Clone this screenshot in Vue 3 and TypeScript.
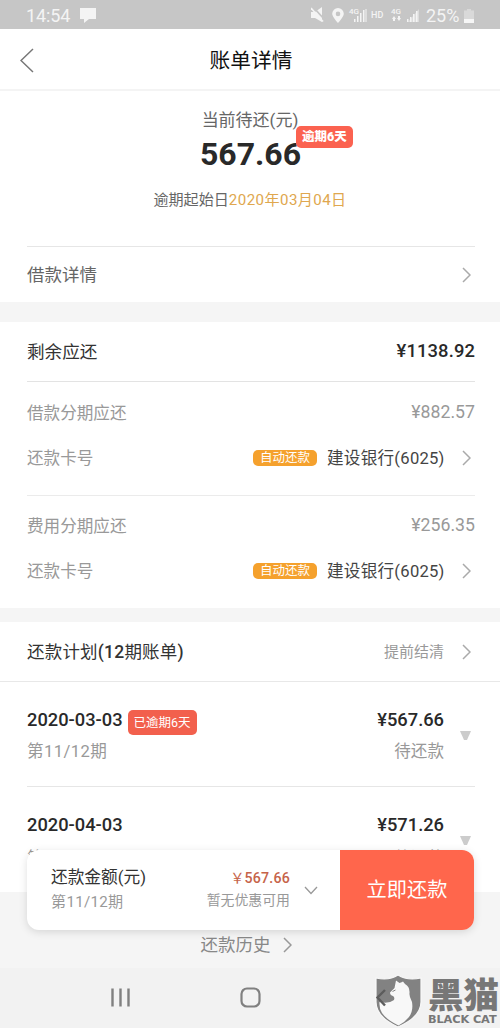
<script setup lang="ts">
interface Charge { name: string; amount: string; card: string }
interface Period { date: string; term: string; amount: string; state: string; overdue?: string }

const charges: Charge[] = [
  { name: '借款分期应还', amount: '¥882.57', card: '建设银行(6025)' },
  { name: '费用分期应还', amount: '¥256.35', card: '建设银行(6025)' },
]
const periods: Period[] = [
  { date: '2020-03-03', term: '第11/12期', amount: '¥567.66', state: '待还款', overdue: '已逾期6天' },
  { date: '2020-04-03', term: '第12/12期', amount: '¥571.26', state: '待还款' },
]
</script>

<template>
  <div class="page">
    <div class="status">
      <span class="clock">14:54</span>
      <svg class="bubble" width="16" height="15" viewBox="0 0 16 15"><path d="M0 0H16V11H9L4 15V11H0Z" fill="#f4f4f4" /></svg>
      <svg class="tray" width="114" height="18" viewBox="0 0 114 18" fill="#f4f4f4">
        <path d="M0 5H4L11 0V15L4 11H0Z" />
        <path d="M2 0L14 13" stroke="#c6c6c6" stroke-width="1.8" />
        <path d="M0 1L12 14.500" stroke="#f4f4f4" stroke-width="1.6" />
        <path fill-rule="evenodd" d="M27 1a5.8 5.8 0 0 1 5.8 5.8C32.800 10 27 16 27 16S21.200 10 21.200 6.800A5.800 5.800 0 0 1 27 1ZM27 4.600a2.300 2.300 0 1 0 0 4.600a2.300 2.300 0 0 0 0-4.600Z" />
        <text x="38" y="7" font-size="8" font-weight="500">4G</text>
        <path d="M43 12h1.500v3H43zM46 9h1.500v6H46zM49 6h1.500v9H49zM52 3h1.500v12H52zM54.500 2h1v13h-1z" />
        <text x="60" y="11" font-size="9" font-weight="500">HD</text>
        <text x="80" y="7" font-size="8" font-weight="500">4G</text>
        <path d="M81 12l2-3 2 3h-1v2h-2v-2zM86 11h1V9h2v2h1l-2 3z" />
        <path d="M96 12h1.500v3H96zM99 10h1.500v5H99zM102 7h1.500v8H102zM105 4h1.500v11H105z" />
        <path d="M108 2V15H97Z" opacity=".45" />
      </svg>
      <span class="percent">25%</span>
      <svg class="battery" width="10" height="14" viewBox="0 0 10 14"><path d="M3 0h4v1.500h3V14H0V1.500h3z" fill="#d9d9d9" /><path d="M0 10h10v4H0z" fill="#f6f6f6" /></svg>
    </div>

    <header class="header">
      <svg class="back" width="14" height="25" viewBox="0 0 14 25"><path d="M13 1L1 12.500L13 24" /></svg>
      <h1>账单详情</h1>
    </header>

    <section class="hero">
      <div class="due-label">当前待还(元)</div>
      <div class="due"><span>567.66</span><b class="due-tag">逾期6天</b></div>
      <div class="since">逾期起始日<em>2020年03月04日</em></div>
    </section>
    <div class="row detail inset">
      <span>借款详情</span>
      <svg class="next" width="9" height="16" viewBox="0 0 9 16"><path d="M1 1L8 8L1 15" /></svg>
    </div>
    <div class="band"></div>

    <section class="remaining">
      <div class="row total inset"><span>剩余应还</span><strong>¥1138.92</strong></div>
      <div v-for="c in charges" :key="c.name" class="charge inset">
        <div class="row charge-row"><span>{{ c.name }}</span><span class="num">{{ c.amount }}</span></div>
        <div class="row card-row">
          <span>还款卡号</span>
          <i class="auto">自动还款</i>
          <span class="bank">{{ c.card }}</span>
          <svg class="next" width="9" height="16" viewBox="0 0 9 16"><path d="M1 1L8 8L1 15" /></svg>
        </div>
      </div>
    </section>
    <div class="band thin"></div>

    <section class="plan">
      <div class="row plan-head">
        <span class="plan-title">还款计划<b>(12</b>期账单<b>)</b></span>
        <span class="settle">提前结清</span>
        <svg class="next" width="9" height="16" viewBox="0 0 9 16"><path d="M1 1L8 8L1 15" /></svg>
      </div>
      <div v-for="p in periods" :key="p.date" class="period inset">
        <div class="period-info">
          <div class="date">{{ p.date }}<span v-if="p.overdue" class="late">{{ p.overdue }}</span></div>
          <div class="sub term">{{ p.term }}</div>
        </div>
        <div class="period-pay">
          <div class="amount">{{ p.amount }}</div>
          <div class="sub">{{ p.state }}</div>
        </div>
        <svg class="fold" width="11" height="10" viewBox="0 0 11 10"><path d="M0 0H11L7 9H4Z" fill="#ccc" /></svg>
      </div>
    </section>

    <div class="history">
      <span>还款历史</span>
      <svg class="next" width="9" height="16" viewBox="0 0 9 16"><path d="M1 1L8 8L1 15" /></svg>
    </div>

    <nav class="nav">
      <svg width="500" height="60" viewBox="0 0 500 60" fill="none" stroke="#808080" stroke-width="2">
        <path d="M112.500 20.500V38.500M120.500 20.500V38.500M128.500 20.500V38.500" stroke-width="2.400" />
        <rect x="241.500" y="20.500" width="18" height="18" rx="5.500" stroke-width="2.200" />
      </svg>
    </nav>

    <div class="paybar">
      <div class="pay-info">
        <div class="pay-title">还款金额(元)</div>
        <div class="pay-term">第11/12期</div>
      </div>
      <div class="pay-sum">
        <div class="pay-amount"><span>￥</span>567.66</div>
        <div class="coupon">暂无优惠可用</div>
      </div>
      <svg class="down" width="14" height="9" viewBox="0 0 14 9"><path d="M1 1L7 7.500L13 1" /></svg>
      <button>立即还款</button>
    </div>

    <div class="mark">
      <svg width="48" height="54" viewBox="0 0 48 54">
        <path d="M1 4Q14 7 23 1Q32 7 46 4V28Q46 43 23 53Q1 43 1 28Z" fill="#828282" stroke="#f8f8f8" stroke-width="1.200" />
        <path d="M21 6.500L24.500 9Q27 8 28 7.500L30 10Q35 13 34.500 19Q34 22 37 28Q38.500 37 34 43Q30 48 23.500 51.500Q12 46 7 39Q4 34 4.500 28Q14 30 19 26Q20 23 18 22Q15 21 15 18.500L19.500 14Z" fill="#f8f8f8" />
        <path d="M17.500 17.500L20.500 16" stroke="#828282" stroke-width="1" />
        <path d="M10 16L2.500 23.500L10 31.500" fill="none" stroke="#5c5c5c" stroke-width="2.400" />
      </svg>
      <div class="mark-text"><div class="mark-cn">黑猫</div><div class="mark-en">BLACK CAT</div></div>
    </div>
  </div>
</template>

<style>
body { margin: 0; overflow: hidden; }
</style>
<style scoped>
.page { position: relative; width: 500px; height: 1028px; overflow: hidden; display: flex; flex-direction: column; background: #fff; color: #333; font-family: Roboto, "Noto Sans CJK SC", sans-serif; box-sizing: border-box; }
.page > * { flex-shrink: 0; box-sizing: border-box; }
.status { height: 29px; background: #c6c6c6; color: #f4f4f4; display: flex; align-items: center; padding: 2px 26px 0 26px; font-size: 18px; }
.clock { width: 54px; letter-spacing: -.1px; }
.tray { margin-left: 215px; }
.percent { margin-left: 1px; width: 38px; white-space: nowrap; }
.header { height: 62px; border-bottom: 2px solid #f4f4f4; display: flex; align-items: center; justify-content: center; position: relative; }
.back { position: absolute; left: 20px; top: 19px; fill: none; stroke: #777; stroke-width: 1.5; }
h1 { margin: 3px 0 0 2px; font-size: 20.7px; font-weight: 400; color: #111; line-height: 30px; }
.hero { height: 155px; display: flex; flex-direction: column; align-items: center; padding-top: 17px; }
.due-label { height: 24px; line-height: 24px; font-size: 17px; color: #666; }
.due { position: relative; margin: 2px 0 0 1px; height: 40px; line-height: 40px; font-size: 32px; font-weight: 700; color: #292929; }
.due-tag { position: absolute; left: 96px; top: -8px; width: 57px; height: 22px; border-radius: 5px; background: #fb6250; color: #fff; font-size: 12.500px; line-height: 21px; text-align: center; white-space: nowrap; }
.since { margin-top: 14px; line-height: 24px; font-size: 15.1px; color: #666; }
.since em { font-style: normal; color: #e0a74e; letter-spacing: .42px; }
.row { display: flex; align-items: center; }
.row > span, .row > strong { position: relative; padding-bottom: 3px; }
.inset { margin: 0 25px 0 27px; }
.next { fill: none; stroke: #aaa; stroke-width: 1.5; }
.detail { border-top: 1.500px solid #e6e6e6; height: 56px; justify-content: space-between; padding-right: 4px; font-size: 17.5px; color: #666; }
.band { height: 20px; background: #f5f5f5; }
.remaining { height: 286px; }
.total { height: 60px; box-sizing: border-box; justify-content: space-between; border-bottom: 1px solid #e3e3e3; font-size: 17.6px; }
.total strong { font-weight: 500; font-size: 18.4px; color: #292929; letter-spacing: .1px; }
.charge { height: 113px; padding-top: 8px; box-sizing: border-box; border-bottom: 1px solid #ebebeb; font-size: 16.6px; color: #999; }
.charge:nth-child(2) { height: 114px; padding-top: 9px; }
.charge:last-child { border-bottom: 0; }
.charge-row { height: 44px; justify-content: space-between; }
.row > .num { font-size: 17.7px; }
.card-row { height: 46px; padding-right: 4px; }
.auto { font-style: normal; margin-left: auto; width: 64px; height: 16px; line-height: 16px; border-radius: 5px; background: #f5a12d; color: #fff; font-size: 12.500px; text-align: center; }
.bank { width: 118px; margin: 0 17px 0 10px; color: #444; white-space: nowrap; letter-spacing: .25px; }
.band.thin { height: 14px; }
.plan { height: 270px; overflow: hidden; }
.plan-head { box-sizing: border-box; height: 60px; padding: 0 29px 0 27px; border-bottom: 1.500px solid #e8e8e8; }
.plan-title { font-size: 17.5px; letter-spacing: .2px; }
.plan-title b { font-weight: 500; }
.settle { margin-left: auto; margin-right: 18px; font-size: 15px; color: #999; }
.period { height: 105px; box-sizing: border-box; border-bottom: 1.500px solid #e6e6e6; padding: 23px 4px 0 0; display: flex; }
.period:last-child { border: 0; }
.date, .amount { height: 30px; line-height: 30px; font-size: 18.3px; font-weight: 500; color: #292929; display: flex; align-items: center; }
.sub { height: 32px; line-height: 34px; font-size: 16.6px; color: #999; }
.period:last-child .sub { line-height: 37px; }
.term { letter-spacing: .4px; }
.late { margin-left: 5px; margin-top: 4px; width: 69px; height: 25px; line-height: 25px; border-radius: 5px; background: #f2604d; color: #fff; font-size: 12.500px; font-weight: 400; text-align: center; white-space: nowrap; }
.period-pay { margin-left: auto; margin-right: 16px; text-align: right; }
.amount { justify-content: flex-end; }
.fold { margin-top: 26px; }
.history { height: 76px; background: #f5f5f5; display: flex; justify-content: center; align-items: flex-end; padding: 0 8px 10px 0; color: #888; font-size: 17.5px; line-height: 26px; }
.history .next { margin: 0 0 5px 12px; stroke: #999; }
.nav { height: 60px; background: #f2f2f2; }
.paybar { position: absolute; left: 27px; top: 850px; width: 447px; height: 80px; border-radius: 12px; background: #fff; box-shadow: 0 2px 8px rgba(0,0,0,.13); overflow: hidden; display: flex; align-items: center; }
.pay-info { padding-left: 24px; padding-bottom: 2px; width: 112px; white-space: nowrap; }
.pay-title { font-size: 16.7px; line-height: 26px; }
.pay-term { font-size: 15.1px; line-height: 23px; color: #999; letter-spacing: .3px; }
.pay-sum { width: 127px; text-align: right; padding-bottom: 3px; }
.pay-amount { font-size: 14.200px; font-weight: 500; color: #c66349; line-height: 22px; letter-spacing: .2px; }
.pay-amount span { font-weight: 400; }
.coupon { font-size: 13.9px; line-height: 22px; color: #999; }
.down { margin-left: 14px; fill: none; stroke: #999; stroke-width: 1.300; }
button { margin-left: auto; height: 80px; width: 134px; border: 0; padding: 0 0 3px; background: #ff664c; color: #fff; font: 400 20.2px Roboto, "Noto Sans CJK SC", sans-serif; }
.mark { position: absolute; left: 375px; top: 974px; display: flex; width: 125px; color: #777; }
.mark-text { margin-left: 5px; white-space: nowrap; }
.mark-cn { font: 900 35.500px/38px "Noto Sans CJK SC", sans-serif; height: 40px; }
.mark-en { font: 700 11.300px/12px "DejaVu Sans", sans-serif; letter-spacing: -.1px; }
</style>
